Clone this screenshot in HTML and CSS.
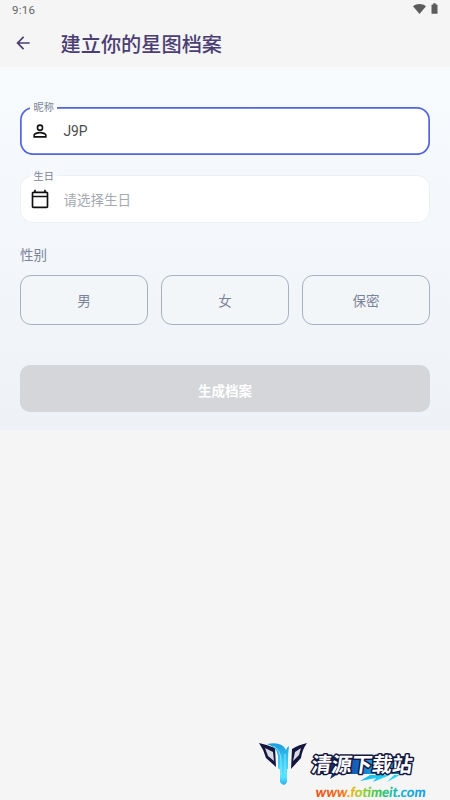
FILE: index.html
```html
<!DOCTYPE html>
<html lang="zh-CN">
<head>
<meta charset="utf-8">
<title>建立你的星图档案</title>
<link rel="stylesheet" href="styles.css">
</head>
<body>
<div class="status">
  <span class="time">9:16</span>
  <svg class="status-icons" width="26" height="12" viewBox="0 0 26 12" fill="#5c5c5c">
    <path d="M1 3.2C4.7.3 10.3.3 14 3.2L7.5 11z"/>
    <path d="M20 1.5h1.3V.2h2.4v1.3H25q.5 0 .5.6v8.1q0 .6-.6.6h-4.8q-.6 0-.6-.6V2.1q0-.6.5-.6z"/>
  </svg>
</div>
<header class="appbar">
  <svg class="back" width="20" height="20" viewBox="0 0 24 24" fill="#4b3e73"><path d="M20 11H7.83l5.59-5.59L12 4l-8 8 8 8 1.41-1.41L7.83 13H20v-2z"/></svg>
  <h1>建立你的星图档案</h1>
</header>
<main class="form">
  <div class="field focused">
    <span class="label">昵称</span>
    <svg width="20" height="20" viewBox="0 0 24 24" fill="#111"><path d="M12 5.9a2.1 2.1 0 1 1 0 4.2 2.1 2.1 0 0 1 0-4.2m0 9c2.97 0 6.1 1.46 6.1 2.1v1.1H5.9V17c0-.64 3.13-2.1 6.1-2.1M12 4a4 4 0 1 0 0 8 4 4 0 0 0 0-8zm0 9c-2.67 0-8 1.34-8 4v3h16v-3c0-2.66-5.33-4-8-4z"/></svg>
    <span class="value">J9P</span>
  </div>
  <div class="field birthday">
    <span class="label">生日</span>
    <svg width="20" height="20" viewBox="0 0 24 24" fill="#111"><path d="M20 3h-1V1h-2v2H7V1H5v2H4c-1.1 0-2 .9-2 2v16c0 1.1.9 2 2 2h16c1.1 0 2-.9 2-2V5c0-1.1-.9-2-2-2zm0 18H4V10h16v11zm0-13H4V5h16v3z"/></svg>
    <span class="value hint">请选择生日</span>
  </div>
  <div class="gender-label">性别</div>
  <div class="genders">
    <button>男</button><button>女</button><button>保密</button>
  </div>
  <button class="submit">生成档案</button>
</main>
<svg class="brand" width="200" height="70" viewBox="250 730 200 70">
  <defs>
    <linearGradient id="drip" x1="0" y1="0" x2="0" y2="1"><stop offset="0" stop-color="#1c9bdd"/><stop offset=".45" stop-color="#3bcdf5"/><stop offset=".8" stop-color="#56e4ff"/><stop offset="1" stop-color="#2caeee"/></linearGradient>
    <linearGradient id="swoosh"><stop offset="0" stop-color="#18b9f0"/><stop offset="1" stop-color="#20dff4"/></linearGradient>
    <linearGradient id="plate"><stop offset="0" stop-color="#14163d"/><stop offset=".45" stop-color="#1468c8"/><stop offset=".7" stop-color="#1fc4ee"/><stop offset="1" stop-color="#14163d"/></linearGradient>
    <linearGradient id="url"><stop offset="0" stop-color="#ef4a16"/><stop offset=".24" stop-color="#f06c16"/><stop offset=".32" stop-color="#eeb418"/><stop offset=".42" stop-color="#a0d032"/><stop offset=".58" stop-color="#35c558"/><stop offset=".75" stop-color="#20b5c3"/><stop offset="1" stop-color="#1b9ce8"/></linearGradient>
  </defs>
  <path d="M259 743q9 2 16 5l1 19-10-9q-2-8-7-15zM307 743q-9 2-15 6l-1 20 10-11q1-8 6-15z" fill="#14163d"/>
  <path d="M265 748l8 4 1 9-6-5zM301 748l-6 4-2 9 6-6z" fill="#d8dbe4"/>
  <path d="M267 744q15-3 19 6 1-3 3-4-1 7-1 14v9h-1v13q-3 6-7 0v-13q-2 1-2-2v-11q-1-9-11-12z" fill="url(#drip)"/>
  <path d="M273 746q8 4 8 15v14M285 754v20" fill="none" stroke="#a5f2ff" stroke-width=".7"/>
  <path d="M322 756h88l-5 18h-67l-8 5 2-5h-14z" fill="url(#plate)"/>
  <path d="M370 775h20l-17 7 3-4-16 3zM394 775h6l-13 7z" fill="url(#swoosh)"/>
  <text class="brand-name" transform="translate(310.5 772) skewX(-8)" textLength="101" lengthAdjust="spacingAndGlyphs">清源下载站</text>
  <text class="brand-url" transform="translate(315 797) skewX(-8)" textLength="110" lengthAdjust="spacingAndGlyphs">www.fotimeit.com</text>
</svg>
</body>
</html>
```
FILE: styles.css
```css
* { box-sizing: border-box; }
body {
  margin: 0;
  height: 800px;
  overflow: hidden;
  background: #f5f5f5;
  font-family: Roboto, "Noto Sans CJK SC", sans-serif;
}
.status {
  height: 20px;
  display: flex;
  justify-content: space-between;
  align-items: center;
  padding: 0 12px;
  color: #666;
  font-size: 11.5px;
  letter-spacing: .3px;
}
.status-icons { margin-top: -2px; }
.appbar {
  height: 47px;
  display: flex;
  align-items: center;
  padding-left: 13px;
  gap: 27.5px;
}
.back { margin-top: -1px; }
h1 {
  margin: 3px 0 0;
  color: #4b3e73;
  font-size: 20.2px;
  line-height: 30px;
  font-weight: 500;
}
.form {
  height: 363px;
  padding: 40px 20px 0;
  background: linear-gradient(#f8fbfe, #eef2f6);
}
.field {
  position: relative;
  height: 48px;
  margin-bottom: 20px;
  display: flex;
  align-items: center;
  padding-left: 10px;
  gap: 13.5px;
  background: #fff;
  border-radius: 13px;
  box-shadow: inset 0 0 0 1px #eceff3;
}
.field.focused { box-shadow: inset 0 0 0 1.7px #5264df; }
.label {
  position: absolute;
  left: 10px;
  top: -7px;
  padding: 0 3.5px;
  font-size: 10.2px;
  line-height: 16px;
  color: #7b8398;
  background: linear-gradient(#f7fafd 45%, #fff 45%);
}
.birthday .label { top: -6px; }
.value {
  font-size: 13.8px;
  color: #4c4c50;
}
.hint { font-size: 13.5px; color: #a5a9b1; }
.gender-label {
  margin-top: 22px;
  font-size: 13.5px;
  line-height: 20px;
  color: #7b839a;
}
.genders {
  display: grid;
  grid-template-columns: repeat(3, 1fr);
  gap: 13px;
  margin-top: 10px;
}
button {
  padding: 0;
  font: 13.5px Roboto, "Noto Sans CJK SC", sans-serif;
}
.genders button {
  height: 50px;
  border: 1px solid #a9b0c0;
  border-radius: 11px;
  background: #f3f6f8;
  color: #7b839a;
}
.submit {
  display: block;
  width: 100%;
  height: 47px;
  margin-top: 40px;
  padding-top: 2px;
  border: 0;
  border-radius: 10px;
  background: #d4d6d9;
  color: #fff;
  font-weight: 700;
}
.brand {
  position: absolute;
  left: 250px;
  top: 730px;
}
.brand-name {
  font: 700 20.5px "Noto Sans CJK SC", sans-serif;
  fill: #fff;
  stroke: #14163d;
  stroke-width: 3px;
  stroke-linejoin: round;
  paint-order: stroke;
}
.brand-url {
  font: 900 14px Lato, sans-serif;
  fill: url(#url);
}
```
